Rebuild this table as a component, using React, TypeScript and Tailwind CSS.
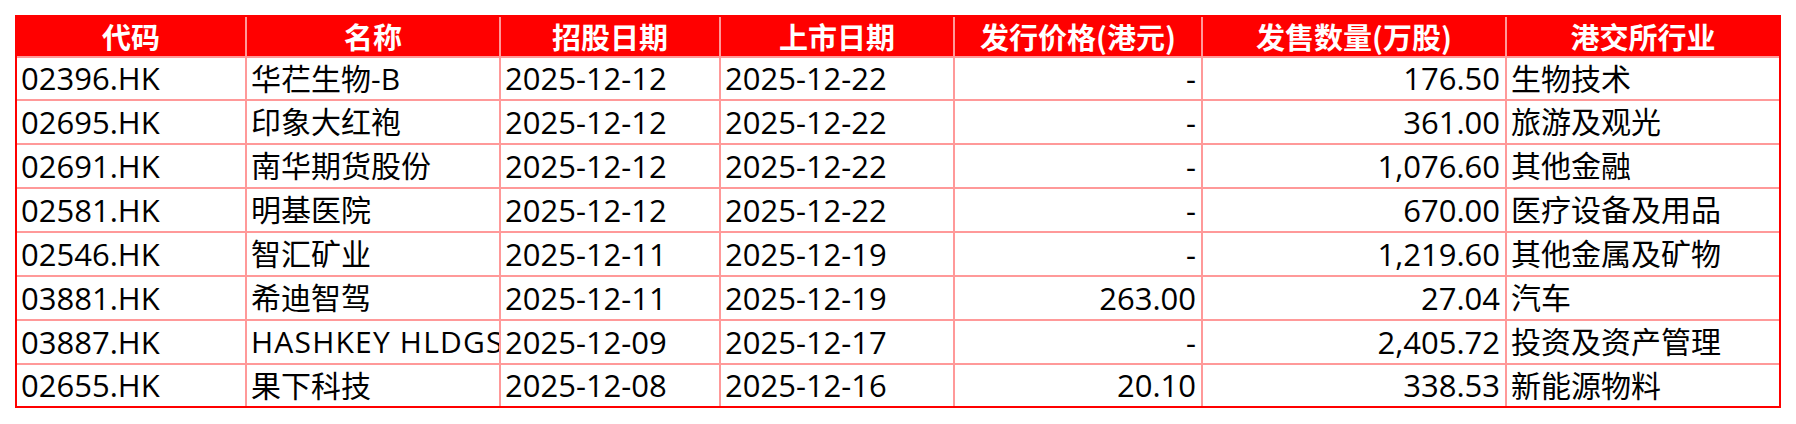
const headers = ["代码", "名称", "招股日期", "上市日期", "发行价格(港元)", "发售数量(万股)", "港交所行业"];

const rows = [
  ["02396.HK", "华芢生物-B", "2025-12-12", "2025-12-22", "-", "176.50", "生物技术"],
  ["02695.HK", "印象大红袍", "2025-12-12", "2025-12-22", "-", "361.00", "旅游及观光"],
  ["02691.HK", "南华期货股份", "2025-12-12", "2025-12-22", "-", "1,076.60", "其他金融"],
  ["02581.HK", "明基医院", "2025-12-12", "2025-12-22", "-", "670.00", "医疗设备及用品"],
  ["02546.HK", "智汇矿业", "2025-12-11", "2025-12-19", "-", "1,219.60", "其他金属及矿物"],
  ["03881.HK", "希迪智驾", "2025-12-11", "2025-12-19", "263.00", "27.04", "汽车"],
  ["03887.HK", "HASHKEY HLDGS", "2025-12-09", "2025-12-17", "-", "2,405.72", "投资及资产管理"],
  ["02655.HK", "果下科技", "2025-12-08", "2025-12-16", "20.10", "338.53", "新能源物料"],
];

export default function App() {
  return (
    <div className="min-h-screen bg-white p-[15px]">
      <div className="grid w-fit grid-cols-[228px_252px_218px_232px_246px_302px_272px] grid-rows-[39px_41px_repeat(6,42px)_41px] gap-[2px] border-2 border-[#ff0000] bg-[#ff9999]">
        {headers.map((h) => (
          <div
            key={h}
            className="flex items-center justify-center bg-[#ff0000] font-['Noto_Sans_CJK_SC',sans-serif] text-[29px] font-bold leading-none text-white"
          >
            {h}
          </div>
        ))}
        {rows.map((row) =>
          row.map((cell, i) => {
            const right = i === 4 || i === 5;
            const cjk = i === 1 || i === 6;
            // latin caps in the name column run wider in the original font
            const wide = i === 1 && /^[A-Z ]+$/.test(cell);
            return (
              <div
                key={row[0] + i}
                className={
                  "flex items-center overflow-hidden whitespace-nowrap bg-white font-['Open_Sans','Noto_Sans_CJK_SC',sans-serif] leading-none text-black " +
                  (right ? "justify-end pr-[5px] " : "pl-[4px] ") +
                  (cjk ? "text-[30px] " : "text-[31px] ") +
                  (wide ? "tracking-[1.2px]" : "")
                }
              >
                {cell}
              </div>
            );
          })
        )}
      </div>
    </div>
  );
}
